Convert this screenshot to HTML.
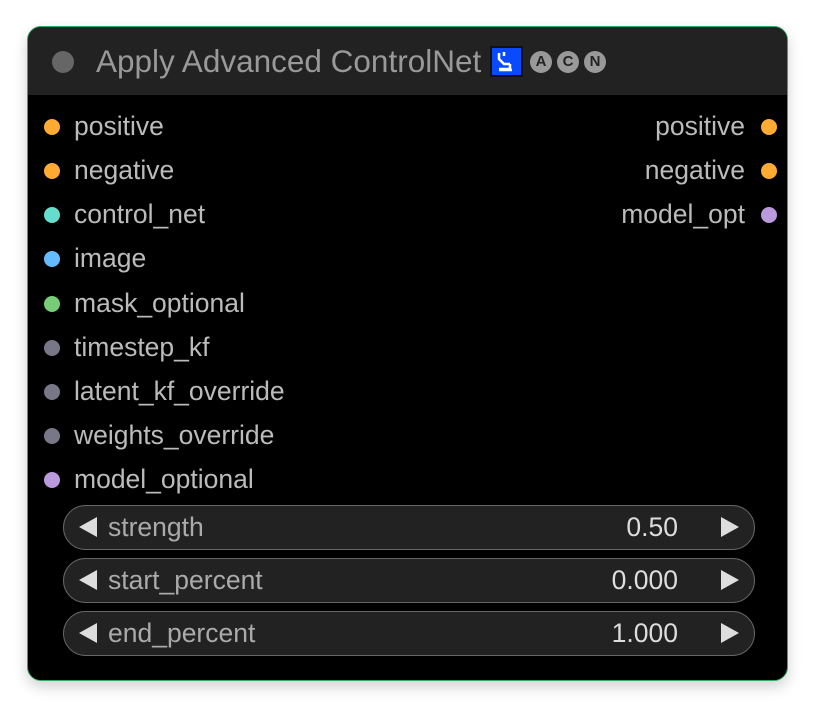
<!DOCTYPE html>
<html><head><meta charset="utf-8"><style>
body{margin:0;width:814px;height:707px;background:#fff;position:relative;overflow:hidden;font-family:"Liberation Sans",Arial,sans-serif}
.node{position:absolute;left:27px;top:26px;width:761px;height:655px;background:#000;border-radius:14px;border:1px solid #3a6;box-sizing:border-box;box-shadow:0 6px 14px rgba(0,0,0,.18);overflow:hidden}
.hdr{position:absolute;left:0;top:0;right:0;height:68px;background:#222}
.hdot{position:absolute;left:24px;top:24px;width:22px;height:22px;border-radius:50%;background:#666}
.title{position:absolute;left:68px;top:16px;font-size:31.5px;color:#999;white-space:nowrap}
.badge{position:absolute;left:462px;top:19px;width:33px;height:31px;background:#0a4aff;border:2px solid #111;box-sizing:border-box}
.c{position:absolute;top:24px;width:22px;height:22px;border-radius:50%;background:#999;color:#222;font-size:15px;font-weight:bold;text-align:center;line-height:22px}
.row{position:absolute;font-size:26.5px;color:#bbb;white-space:nowrap}
.d{position:absolute;width:16px;height:16px;border-radius:50%}
.w{position:absolute;left:35px;width:692px;height:45px;border:1.5px solid #666;border-radius:23px;background:#222;box-sizing:border-box;color:#aaa;font-size:26.5px}
.w .l{position:absolute;left:44px;top:6px}
.w .v{position:absolute;right:76px;top:6px;color:#ddd}
.w .al{position:absolute;left:15px;top:11px;width:0;height:0;border-top:10px solid transparent;border-bottom:10px solid transparent;border-right:18px solid #ddd}
.w .ar{position:absolute;right:15px;top:11px;width:0;height:0;border-top:10px solid transparent;border-bottom:10px solid transparent;border-left:18px solid #ddd}
</style></head><body>
<div class="node">
<div class="hdr"><div class="hdot"></div><div class="title">Apply Advanced ControlNet</div>
<div class="badge"><svg width="29" height="27" viewBox="0 0 29 27"><path d="M7 5v6l5 5h6M12 4v4M18 16v5h-11M7 22h13" stroke="#fff" stroke-width="2.5" fill="none"/></svg></div>
<div class="c" style="left:502px">A</div><div class="c" style="left:529px">C</div><div class="c" style="left:556px">N</div>
</div>
<div class="d" style="left:16px;top:92px;background:#fa3"></div><div class="row" style="left:46px;top:84px">positive</div>
<div class="d" style="left:16px;top:136px;background:#fa3"></div><div class="row" style="left:46px;top:128px">negative</div>
<div class="d" style="left:16px;top:180px;background:#6dc"></div><div class="row" style="left:46px;top:172px">control_net</div>
<div class="d" style="left:16px;top:224px;background:#6bf"></div><div class="row" style="left:46px;top:216px">image</div>
<div class="d" style="left:16px;top:269px;background:#7c7"></div><div class="row" style="left:46px;top:261px">mask_optional</div>
<div class="d" style="left:16px;top:313px;background:#778"></div><div class="row" style="left:46px;top:305px">timestep_kf</div>
<div class="d" style="left:16px;top:357px;background:#778"></div><div class="row" style="left:46px;top:349px">latent_kf_override</div>
<div class="d" style="left:16px;top:401px;background:#778"></div><div class="row" style="left:46px;top:393px">weights_override</div>
<div class="d" style="left:16px;top:445px;background:#b9d"></div><div class="row" style="left:46px;top:437px">model_optional</div>
<div class="d" style="left:733px;top:92px;background:#fa3"></div><div class="row" style="right:42px;top:84px">positive</div>
<div class="d" style="left:733px;top:136px;background:#fa3"></div><div class="row" style="right:42px;top:128px">negative</div>
<div class="d" style="left:733px;top:180px;background:#b9d"></div><div class="row" style="right:42px;top:172px">model_opt</div>
<div class="w" style="top:478px"><div class="al"></div><span class="l">strength</span><span class="v">0.50</span><div class="ar"></div></div>
<div class="w" style="top:531px"><div class="al"></div><span class="l">start_percent</span><span class="v">0.000</span><div class="ar"></div></div>
<div class="w" style="top:584px"><div class="al"></div><span class="l">end_percent</span><span class="v">1.000</span><div class="ar"></div></div>
</div>
</body></html>
